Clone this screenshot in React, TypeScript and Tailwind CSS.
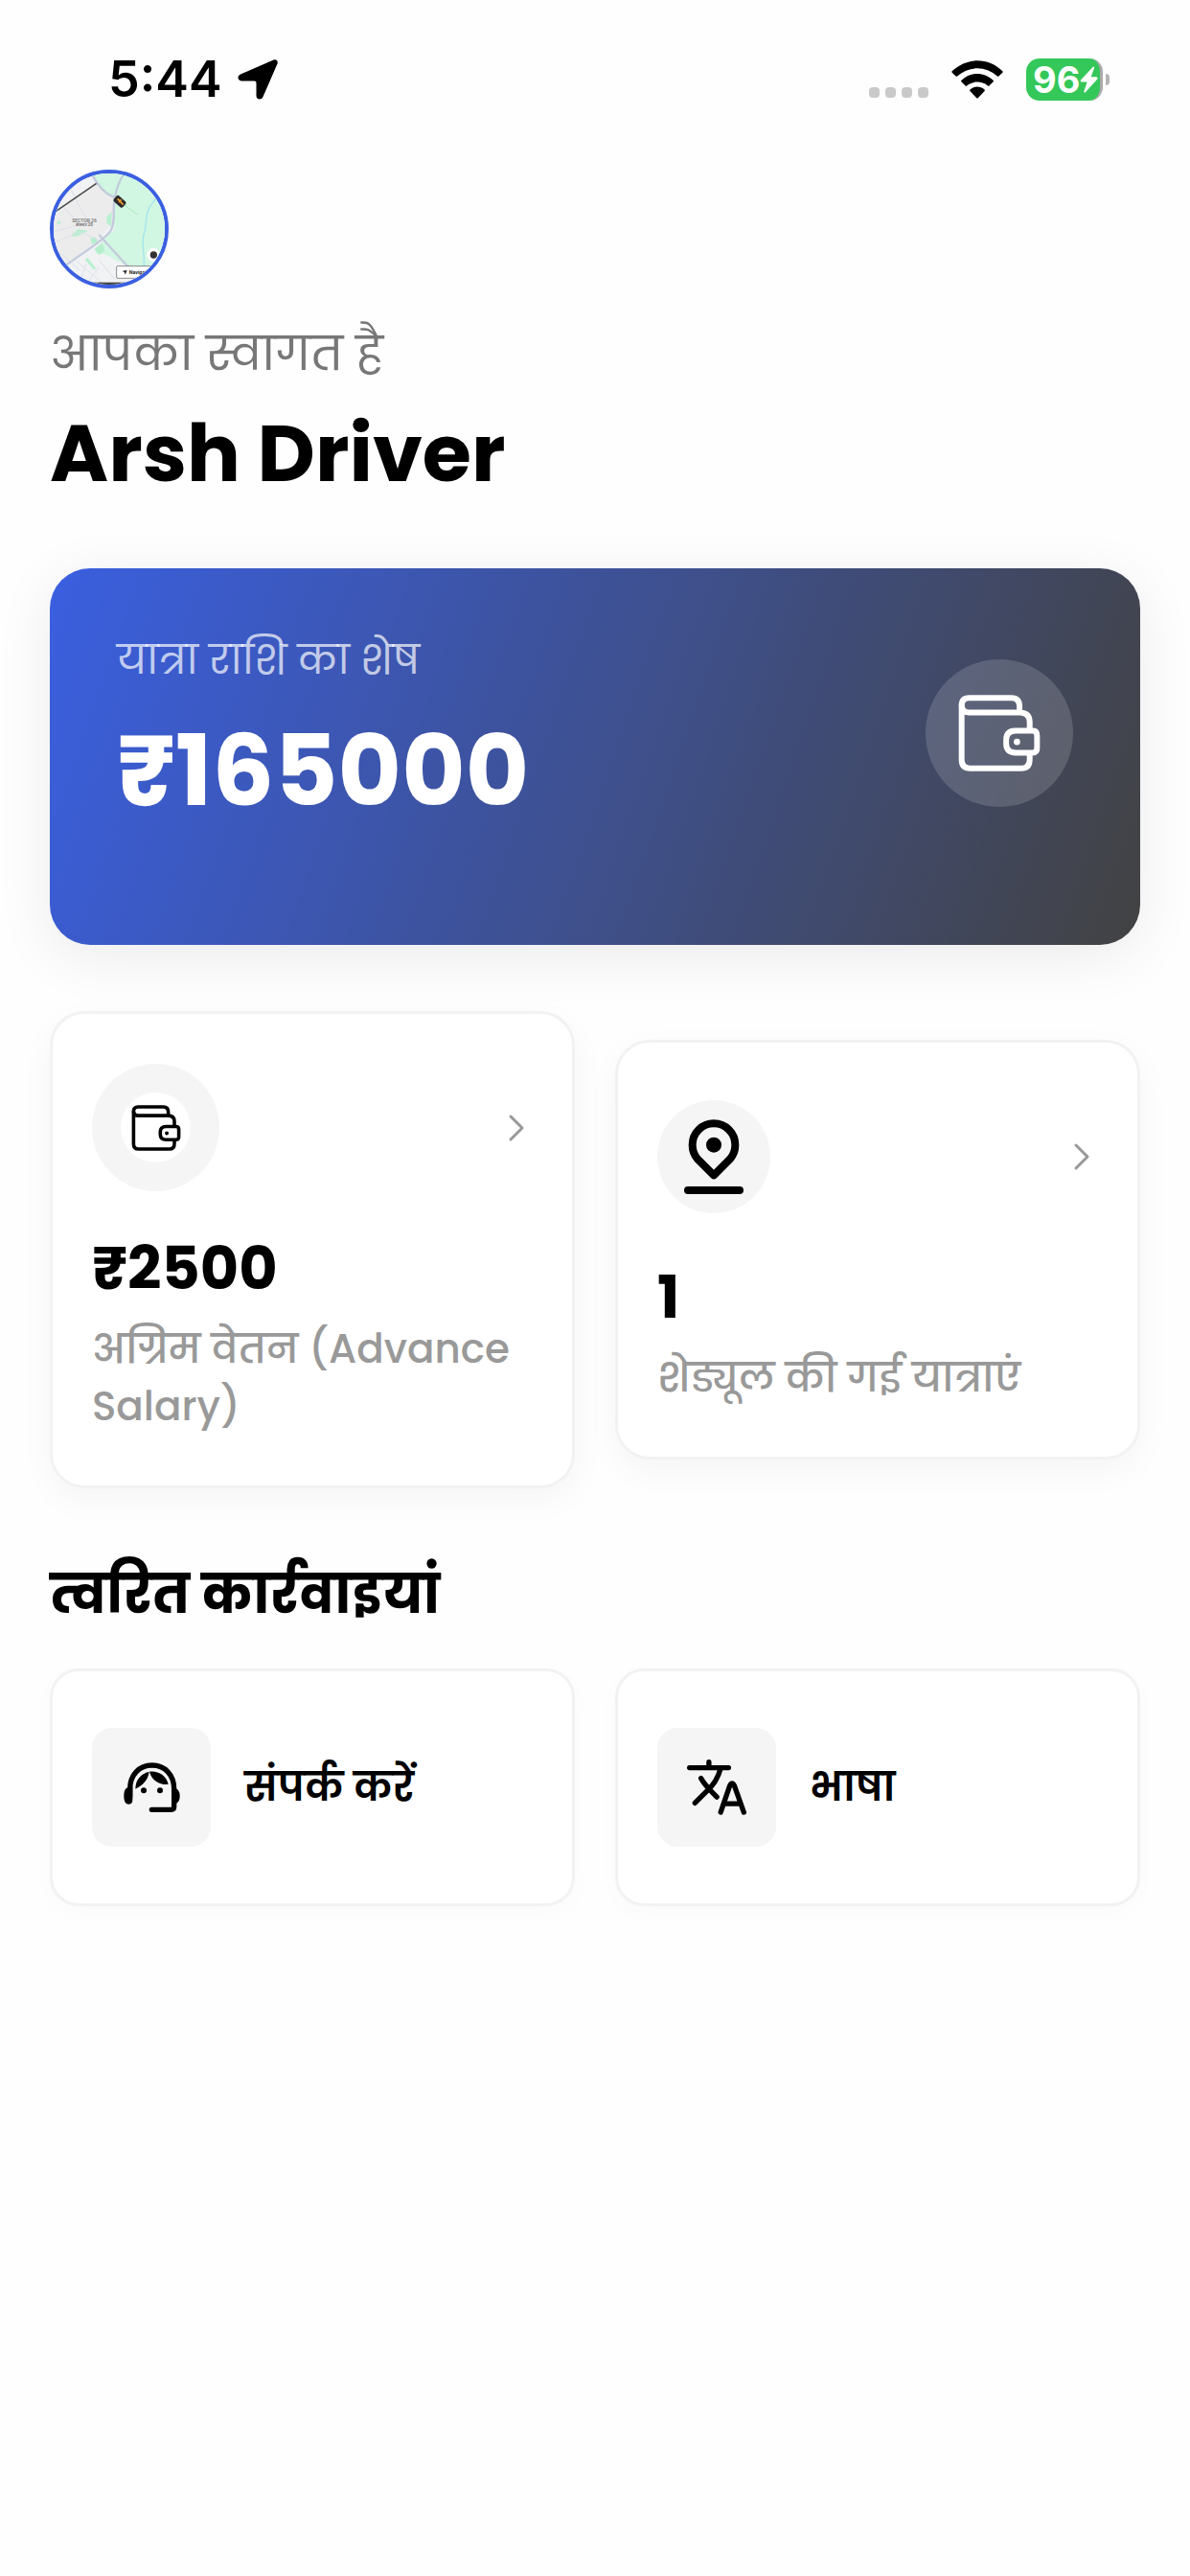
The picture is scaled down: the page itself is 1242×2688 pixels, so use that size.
import type { ReactNode } from "react";

interface StatCardProps {
  icon: ReactNode;
  value: string;
  label: string;
}

interface ActionCardProps {
  icon: ReactNode;
  label: string;
}

function StatusBar() {
  return (
    <div className="flex h-[165px] items-center justify-between pl-[113px] pr-[84px]">
      <div className="flex items-center gap-4">
        <span className="font-['Inter',sans-serif] text-[52px] font-semibold leading-none">5:44</span>
        <svg className="h-[42px] w-[42px]" viewBox="0 0 42 42" aria-hidden="true">
          <path
            d="M37.500 0.500 C40.500 -0.500 42.500 1.500 41.500 4.500 L26.500 39 C25 42.800 19.500 42.200 19.500 38 V24.500 Q19.500 22.500 17.500 22.500 H4 C-0.200 22.500 -0.800 17 3 15.500 Z"
            fill="#000"
          />
        </svg>
      </div>
      <div className="flex items-center">
        <div className="mr-6 flex gap-[6px] pt-7">
          <span className="h-[11px] w-[11px] rounded bg-[#c9c9c9]" />
          <span className="h-[11px] w-[11px] rounded bg-[#c9c9c9]" />
          <span className="h-[11px] w-[11px] rounded bg-[#c9c9c9]" />
          <span className="h-[11px] w-[11px] rounded bg-[#c9c9c9]" />
        </div>
        <svg className="h-10 w-[54px]" viewBox="341 66 162 120" aria-hidden="true">
          <path d="M343 100 C388 56 457 56 501 100 Q503 102 501 104 L490 115 Q487 118 484 115 C448 83 396 83 360 115 Q357 118 354 115 L343 104 Q341 102 343 100Z" />
          <path d="M372 129 C400 101 444 101 472 129 Q474 131 472 133 L460 145 Q457 148 454 145 C436 130 408 130 390 145 Q387 148 384 145 L372 133 Q370 131 372 129Z" />
          <path d="M400 157 C413 146 431 146 444 157 Q447 160 444 163 L425 183 Q422 186 419 183 L400 163 Q397 160 400 157Z" />
        </svg>
        <div className="ml-6 flex items-center gap-[3px]">
          <div className="flex h-11 w-20 items-center overflow-hidden rounded-[14px] border-r-[3px] border-[#aaa] bg-[#34c759] pl-[7px] text-white">
            <span className="font-['Inter',sans-serif] text-[38px] font-bold leading-none">96</span>
            <svg className="h-7 w-[19px]" viewBox="742 89 55 82" aria-hidden="true">
              <path
                d="M782 91 L744 132 Q743 136 746 137 H764 L754 167 Q755 171 759 169 L796 128 Q797 123 793 122 H776 L786 94 Q785 90 782 91Z"
                fill="#fff"
              />
            </svg>
          </div>
          <span className="h-3 w-1 rounded-r-full bg-[#b5b5b5]" />
        </div>
      </div>
    </div>
  );
}

function AvatarMap() {
  return (
    <svg className="h-full w-full" viewBox="48 48 348 348" aria-hidden="true">
      <rect x="48" y="48" width="348" height="348" fill="#f1f2f4" />
      <path d="M48 180 L185 80 L238 128 L232 200 L190 255 L90 330 L48 340Z" fill="#ececec" />
      <path
        d="M165 40 L420 40 L420 400 L320 400 L275 335 L205 300 L180 300 L205 255 L238 225 L240 125 L195 95Z"
        fill="#d1f7e2"
      />
      <path d="M100 243 L125 222 L155 228 L118 246Z M213 185 L230 168 L228 215 L215 205Z" fill="#b8f0cf" />
      <path d="M163 250 L180 248 L185 262 L168 270Z M175 285 L200 265 L208 290 L190 303Z" fill="#b4efcc" />
      <path d="M146 318 L155 312 L180 345 L175 350Z M58 200 L68 195 L70 205 L60 208Z" fill="#b8f0cf" />
      <path
        d="M60 130 L120 200 M100 95 L150 190 M50 230 L140 205 M60 290 L130 350 M110 315 L200 390 M48 265 L130 230 L200 262 M150 330 L130 390 M190 340 L150 395 M190 320 L240 380"
        stroke="#dcdfe8"
        strokeWidth="3"
        fill="none"
      />
      <path
        d="M170 55 C190 90 210 115 240 122 C245 90 255 70 268 48 M240 122 C230 160 245 200 225 230 C195 265 140 295 80 340 M190 240 L285 345"
        stroke="#c3cbdc"
        strokeWidth="7"
        fill="none"
      />
      <path d="M372 125 C325 165 345 200 330 240 C322 280 335 300 330 345" stroke="#a4e4ee" strokeWidth="4" fill="none" />
      <path d="M260 140 L312 178" stroke="#b9ecc9" strokeWidth="4" />
      <path d="M50 170 L182 79" stroke="#4a4a4a" strokeWidth="5" />
      <rect x="236" y="124" width="38" height="24" rx="6" fill="#2b2b2b" transform="rotate(42 255 136)" />
      <path d="M248 127 L266 146 M260 130 L252 138" stroke="#f09a2e" strokeWidth="5" />
      <text x="144" y="200" textAnchor="middle" fontSize="15" fontWeight="600" fill="#777" fontFamily="Roboto">
        SECTOR 26
      </text>
      <text x="144" y="214" textAnchor="middle" fontSize="13" fontWeight="600" fill="#777" fontFamily="Poppins">
        सेक्टर 26
      </text>
      <circle cx="361" cy="303" r="21" fill="#fff" />
      <circle cx="361" cy="303" r="11" fill="#333" />
      <rect x="245" y="338" width="160" height="38" rx="3" fill="#fff" stroke="#555" strokeWidth="2" />
      <path d="M263 353 L278 351 L272 365 L270 358Z" fill="#222" />
      <text x="284" y="363" fontSize="16" fontWeight="700" fill="#222" fontFamily="Roboto">
        Navigate
      </text>
      <rect x="48" y="389" width="348" height="12" fill="#444" />
    </svg>
  );
}

function WalletIcon({ className }: { className: string }) {
  return (
    <svg
      className={className}
      viewBox="184 191 257 241"
      fill="none"
      stroke="currentColor"
      strokeWidth="18"
      strokeLinecap="round"
      strokeLinejoin="round"
      aria-hidden="true"
    >
      <path d="M194 225 V395 Q194 422 221 422 H381 Q408 422 408 394 V380" />
      <path d="M376 243 V228 Q376 201 350 201 H218 Q194 201 194 225 Q196 247 218 247 H380 Q408 249 408 278 V300" />
      <path d="M364 304 H417 Q431 304 431 319 V358 Q431 373 417 373 H364 Q334 373 334 344 V333 Q334 304 364 304Z" />
      <circle cx="368" cy="339" r="10" fill="currentColor" stroke="none" />
    </svg>
  );
}

function PinIcon() {
  return (
    <svg className="h-[78px] w-[62px]" viewBox="87 68 186 234" aria-hidden="true">
      <g fill="none" stroke="#000" strokeWidth="24" strokeLinecap="round" strokeLinejoin="round">
        <path d="M180 243 L129 192 C118 179 113 164 113 148 A67 67 0 0 1 247 148 C247 164 242 179 231 192 Z" />
        <path d="M99 290 H261" />
      </g>
      <circle cx="180" cy="148" r="24" />
    </svg>
  );
}

function AgentIcon() {
  return (
    <svg className="h-[52px] w-[59px]" viewBox="27 43 177 156" aria-hidden="true">
      <path
        d="M47 150 V126 C47 82 76 52 116 52 C156 52 185 82 185 126 V182 Q185 191 176 191 H115"
        fill="none"
        stroke="#000"
        strokeWidth="16"
        strokeLinecap="round"
      />
      <path d="M40 122 C30 126 28 136 28 148 C28 164 32 174 43 174 C52 174 55 168 55 160 V120Z" />
      <path d="M190 124 C200 129 203 138 203 149 C203 160 200 168 190 173Z" />
      <path d="M64 126 C64 98 80 79 107 72 C104 95 90 113 64 126Z" />
      <path d="M108 72 C136 69 161 84 167 112 C140 114 116 101 108 72Z" />
      <circle cx="90" cy="131" r="9" />
      <circle cx="141" cy="131" r="9" />
    </svg>
  );
}

function TranslateIcon() {
  return (
    <svg
      className="h-[58px] w-[62px]"
      viewBox="35 35 187 175"
      fill="none"
      stroke="#000"
      strokeWidth="16"
      strokeLinecap="round"
      strokeLinejoin="round"
      aria-hidden="true"
    >
      <path d="M43 61 H166 M104 43 V58 M140 66 C132 95 116 117 100 132 L60 172 M79 94 C90 116 108 131 129 153" />
      <path d="M141 201 L170 117 Q177 104 184 117 L214 201 M153 174 H202" />
    </svg>
  );
}

function StatCard({ icon, value, label }: StatCardProps) {
  return (
    <button className="block w-full rounded-[36px] border-[3px] border-[#f2f2f2] bg-white px-[41px] py-[52px] text-left shadow-[0_12px_36px_rgba(0,0,0,0.04)]">
      <div className="flex h-[133px] items-center justify-between">
        {icon}
        <svg className="h-[34px] w-[34px]" viewBox="0 0 34 34" aria-hidden="true">
          <path
            d="M11 5 L23 17 L11 29"
            fill="none"
            stroke="#999"
            strokeWidth="3"
            strokeLinecap="round"
            strokeLinejoin="round"
          />
        </svg>
      </div>
      <p className="mt-9 text-[62px] font-bold leading-[90px]">{value}</p>
      <p className="mt-[9px] text-[42px] font-medium leading-[60px] text-[#999]">{label}</p>
    </button>
  );
}

function ActionCard({ icon, label }: ActionCardProps) {
  return (
    <button className="flex h-[248px] w-full items-center gap-[35px] rounded-[30px] border-[3px] border-[#f2f2f2] bg-white px-[41px] text-left shadow-[0_6px_24px_rgba(0,0,0,0.02)]">
      <span className="flex h-[124px] w-[124px] shrink-0 items-center justify-center rounded-[21px] bg-[#f5f5f5]">
        {icon}
      </span>
      <span className="text-[42px] font-semibold leading-[60px]">{label}</span>
    </button>
  );
}

export default function App() {
  return (
    <div lang="hi" className="min-h-screen bg-[#fefefe] font-['Poppins','Noto_Sans',sans-serif] text-black">
      <StatusBar />

      <main className="px-[52px] pb-16 pt-3">
        <header>
          <div className="h-[124px] w-[124px] overflow-hidden rounded-full border-4 border-[#3a5fe0]">
            <AvatarMap />
          </div>
          <p className="mt-8 text-[49px] leading-[72px] text-[#777]">आपका स्वागत है</p>
          <h1 className="mt-2 text-[83px] font-bold leading-[120px]">Arsh Driver</h1>
        </header>

        <section className="mt-[60px] min-h-[393px] rounded-[42px] bg-linear-[109deg] from-[#3a5fe0] to-[#424242] px-[70px] pt-[66px] shadow-[0_12px_60px_rgba(0,0,0,0.08)]">
          <div className="flex items-center justify-between">
            <div>
              <p className="text-[42px] leading-[60px] text-white/70">यात्रा राशि का शेष</p>
              <p className="mt-5 text-[102px] font-bold leading-[132px] text-white">₹165000</p>
            </div>
            <div className="flex h-[154px] w-[154px] items-center justify-center rounded-full bg-white/15 text-white">
              <WalletIcon className="h-20 w-[86px]" />
            </div>
          </div>
        </section>

        <section className="mt-[69px] grid grid-cols-2 items-center gap-[42px]">
          <StatCard
            icon={
              <span className="flex h-[133px] w-[133px] items-center justify-center rounded-full bg-[#f5f5f5]">
                <span className="flex h-[73px] w-[73px] items-center justify-center rounded-full bg-white">
                  <WalletIcon className="h-12 w-[52px]" />
                </span>
              </span>
            }
            value="₹2500"
            label="अग्रिम वेतन (Advance Salary)"
          />
          <StatCard
            icon={
              <span className="flex h-[118px] w-[118px] items-center justify-center rounded-full bg-[#f5f5f5]">
                <PinIcon />
              </span>
            }
            value="1"
            label="शेड्यूल की गई यात्राएं"
          />
        </section>

        <h2 className="mt-[69px] text-[56px] font-bold leading-[84px]">त्वरित कार्रवाइयां</h2>

        <section className="mt-[35px] grid grid-cols-2 gap-[42px]">
          <ActionCard icon={<AgentIcon />} label="संपर्क करें" />
          <ActionCard icon={<TranslateIcon />} label="भाषा" />
        </section>
      </main>
    </div>
  );
}
